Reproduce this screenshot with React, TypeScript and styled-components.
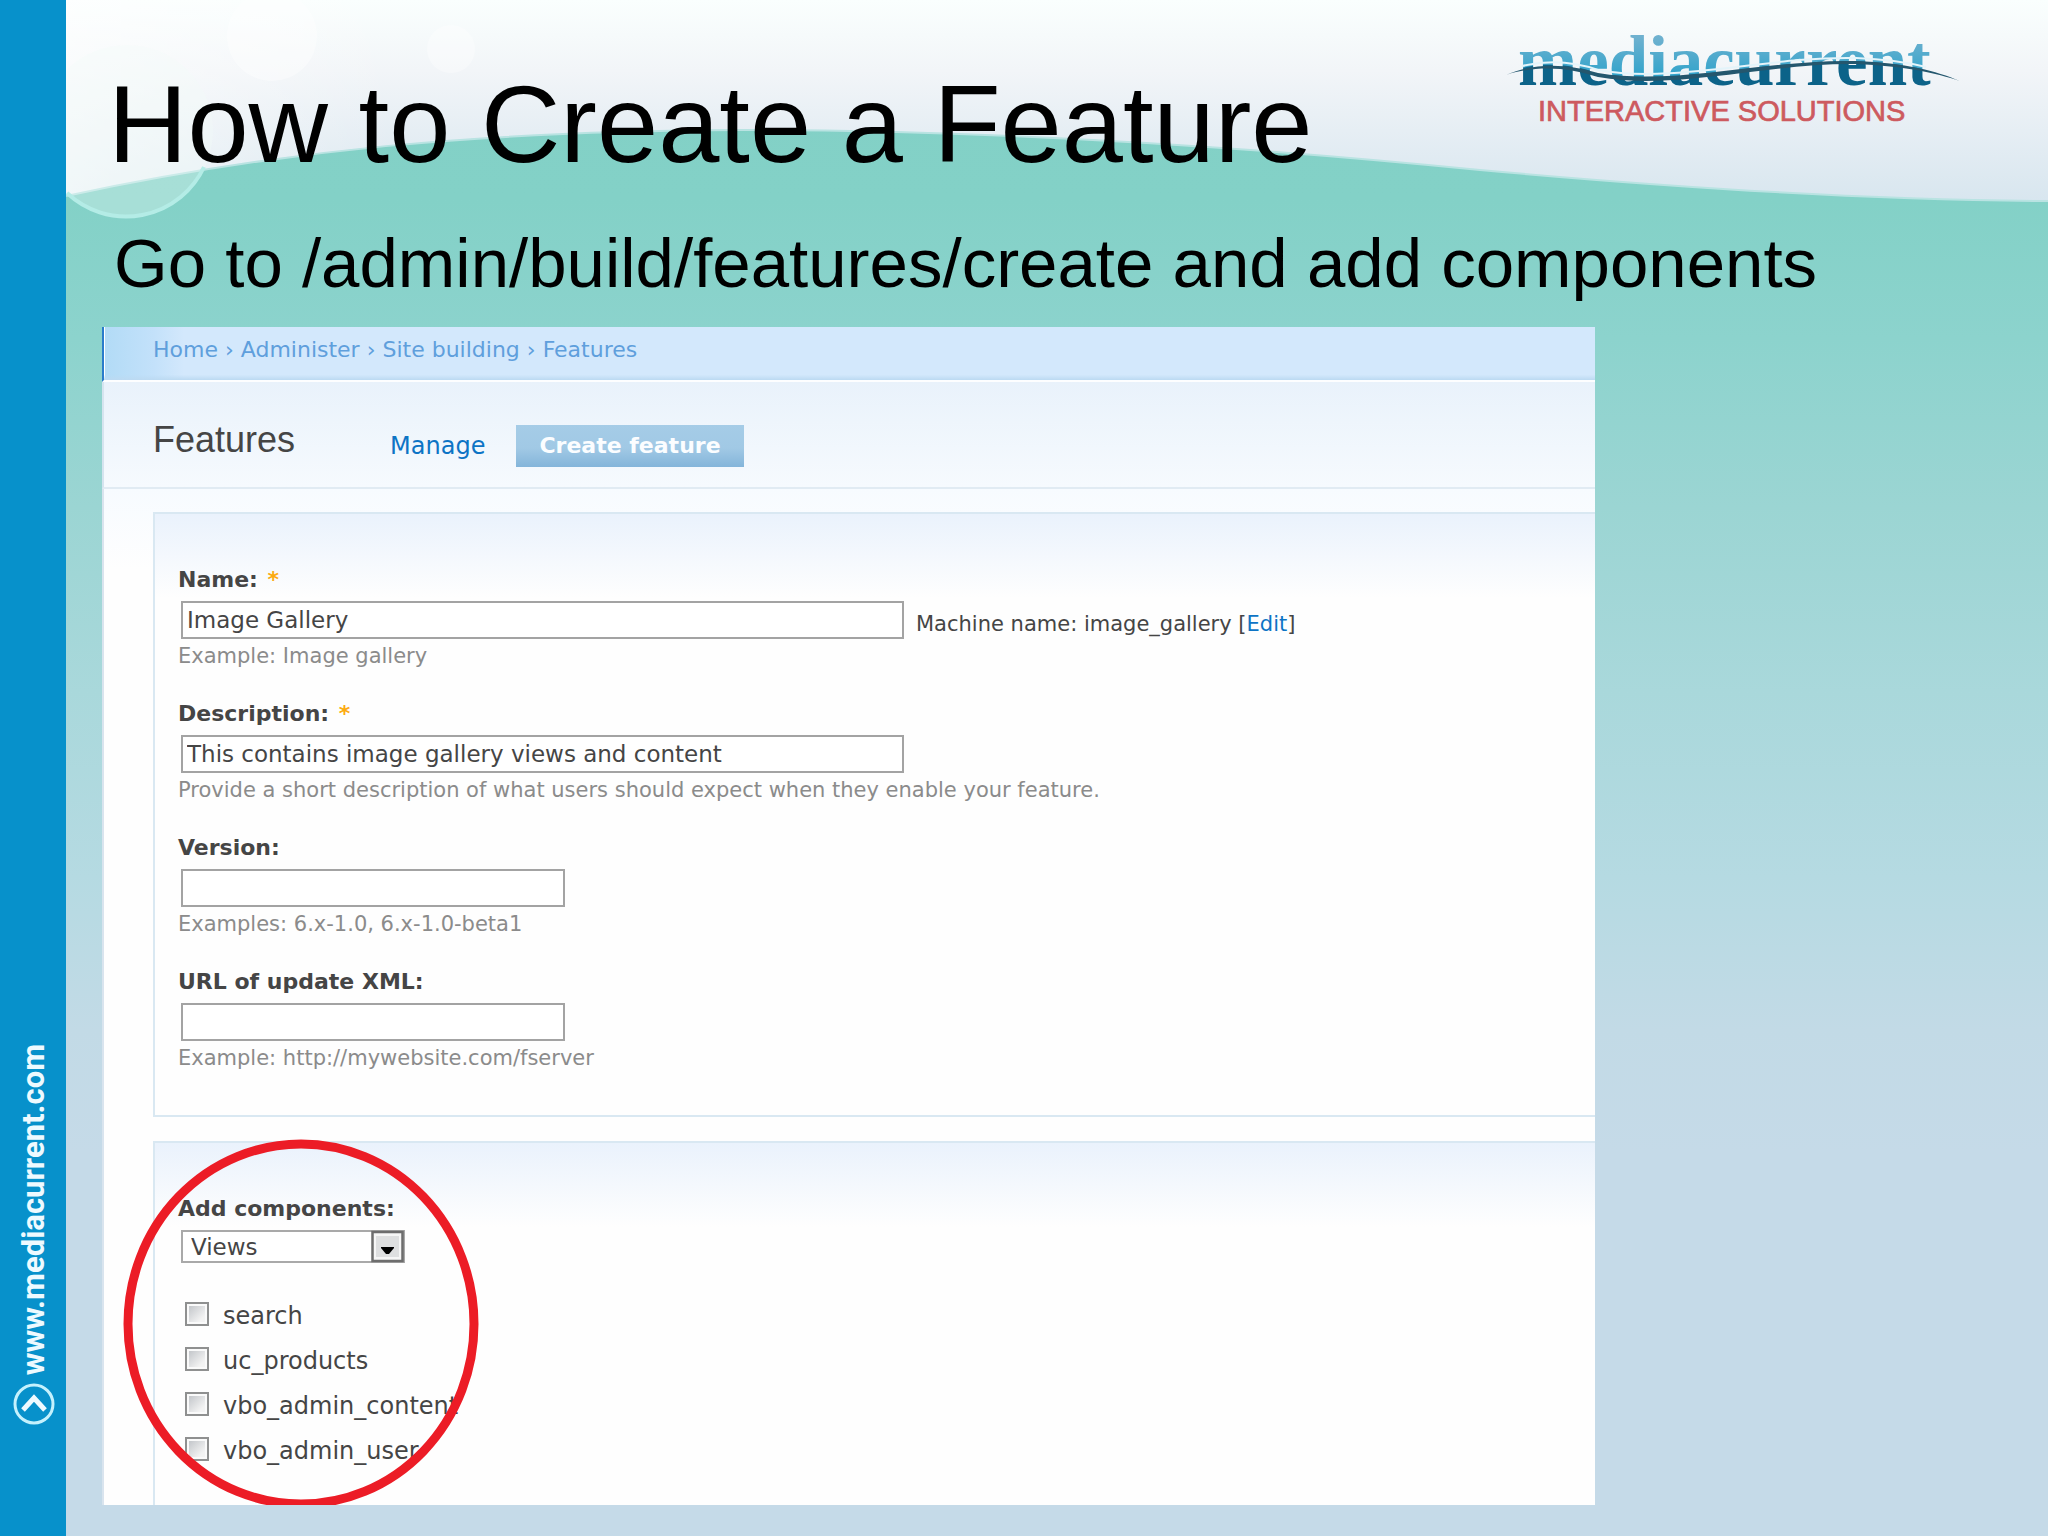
import React from "react";
import styled, { createGlobalStyle, css } from "styled-components";

const sans = `"Liberation Sans", Arial, Helvetica, sans-serif`;
const ui = `"DejaVu Sans", Verdana, sans-serif`;

const GlobalStyle = createGlobalStyle`
  *, *::before, *::after { box-sizing: border-box; }
  body { margin: 0; font-family: ${sans}; color: #000; }
  h1, h2, p, ul, ol { margin: 0; padding: 0; font-weight: normal; }
  a { text-decoration: none; }
`;

const Slide = styled.div`
  display: flex;
  min-height: 100vh;
  overflow: hidden;
  background: linear-gradient(
    #82d0c5 0%, #83d1c7 13%, #8cd3cd 22%, #9bd5d3 33%, #a9d8db 45%,
    #b5dae2 57%, #c2dae6 67%, #c5dae8 75%, #c5dae8 100%
  );
`;

const SideRail = styled.aside`
  flex: none;
  width: 66px;
  padding: 0 0 112px 2px;
  display: flex;
  flex-direction: column;
  justify-content: flex-end;
  align-items: center;
  gap: 8px;
  background: #0791cb;
`;

const SiteLink = styled.a`
  writing-mode: vertical-rl;
  transform: rotate(180deg);
  font: bold 31px/36px Roboto, "Arial Narrow", sans-serif;
  color: #eefaff;
`;

const Main = styled.main`
  position: relative;
  flex: 1;
  min-width: 0;
  padding: 27px 0 32px 36px;
`;

const WaveArt = styled.svg`
  position: absolute;
  top: 0;
  left: 0;
  width: 100%;
  height: 230px;
`;

const TitleRow = styled.header`
  position: relative;
  display: flex;
  justify-content: space-between;
  align-items: flex-start;
  padding: 0 86px 0 6px;
`;

const Title = styled.h1`
  padding-top: 37px;
  font-size: 110px;
  line-height: 120px;
`;

const Subtitle = styled.p`
  position: relative;
  margin: 40px 0 23px;
  padding-left: 12px;
  font-size: 69px;
  line-height: 80px;
`;

const PanelGrid = styled.div`
  position: relative;
  display: grid;
  grid-template-columns: minmax(0, 1493fr) minmax(0, 453fr);
`;

const Panel = styled.section`
  overflow: hidden;
  background: #fefefe;
  font-family: ${ui};
  color: #454545;
`;

const Breadcrumb = styled.nav`
  padding: 8px 0 15px 49px;
  border-left: 2px solid #2a7ccb;
  border-bottom: 2px solid #fdfeff;
  background:
    linear-gradient(transparent 90%, #bcdaf2 100%),
    linear-gradient(90deg, #fff 0 1px, #b2dbf6 1px, #c3e1fa 50px, #d3e8fc 80px);
  font-size: 22px;
  line-height: 30px;
  color: #5f9fdc;

  a { color: inherit; }
`;

const PanelHead = styled.div`
  display: flex;
  align-items: flex-start;
  padding: 43px 0 20px 49px;
  border-left: 2px solid #d5e4ef;
  border-bottom: 2px solid #e1ebf3;
  background: linear-gradient(#e9f2fb, #f6fafe);
`;

const PanelTitle = styled.h2`
  font: 36px/30px ${sans};
  color: #454545;
`;

const Tabs = styled.nav`
  display: flex;
  gap: 8px;
  margin-left: 72px;
`;

const Tab = styled.a<{ $active?: boolean }>`
  padding: 0 23px;
  font-size: 24px;
  line-height: 42px;
  color: #0d74c5;
  ${(p) =>
    p.$active &&
    css`
      font-size: 22px;
      font-weight: bold;
      color: #fbfdff;
      background: linear-gradient(#a5cce7 0%, #a1c9e5 55%, #84b5da 100%);
    `}
`;

const FormBody = styled.form`
  display: flex;
  flex-direction: column;
  gap: 24px;
  padding: 23px 0 0 49px;
  border-left: 2px solid #d9e4ee;
  background: linear-gradient(#f7fbff, #fefefe 80px);
`;

const Group = styled.div<{ $open?: boolean }>`
  position: relative;
  display: flex;
  flex-direction: column;
  gap: 28px;
  padding: 51px 0 ${(p) => (p.$open ? 31 : 42)}px 23px;
  border: 2px solid #d9e8f2;
  border-right: 0;
  ${(p) => p.$open && "border-bottom: 0;"}
  background: linear-gradient(#eaf2fc, #fefefe 84px);
`;

const Label = styled.label`
  display: block;
  margin-bottom: 6px;
  font-size: 22px;
  font-weight: bold;
  line-height: 30px;
`;

const Required = styled.span`
  margin-left: 2px;
  color: #fcab10;
`;

const InputRow = styled.div`
  display: flex;
  align-items: flex-end;
  gap: 12px;
  margin-left: 3px;
`;

const TextInput = styled.input<{ $wide?: boolean }>`
  width: ${(p) => (p.$wide ? 723 : 384)}px;
  height: 38px;
  padding: 0 4px;
  border: 2px solid #a3a3a3;
  border-radius: 0;
  outline: 0;
  background: #fff;
  font: 23px ${ui};
  color: #454545;
`;

const MachineName = styled.span`
  font-size: 21px;
  line-height: 30px;

  a { color: #0d74c5; }
`;

const Hint = styled.p`
  margin-top: 2px;
  font-size: 21px;
  line-height: 30px;
  color: #8b8b8b;
`;

const SelectBox = styled.div`
  display: inline-grid;
  margin-left: 3px;
  align-items: center;
  vertical-align: top;

  > * { grid-area: 1 / 1; }
  > svg { justify-self: end; pointer-events: none; }
`;

const Select = styled.select`
  appearance: none;
  width: 224px;
  height: 33px;
  padding: 0 40px 0 8px;
  border: 2px solid #a9a9a9;
  border-radius: 0;
  background: #fff;
  font: 23px ${ui};
  color: #454545;
`;

const CheckList = styled.ul`
  list-style: none;
  padding: 3px 0 0 7px;
`;

const CheckRow = styled.label`
  display: flex;
  align-items: center;
  gap: 14px;
  font-size: 24px;
  line-height: 45px;
`;

const Checkbox = styled.input`
  appearance: none;
  width: 24px;
  height: 24px;
  margin: 0 0 6px;
  padding: 2px;
  border: 2px solid #8f9090;
  background:
    linear-gradient(135deg, #c3c6ca, #f3f3f3 80%) content-box,
    #fafafa;
`;

const Marker = styled.svg`
  position: absolute;
  top: -4px;
  left: -32px;
  width: 356px;
  height: 370px;
  pointer-events: none;
`;

const waterline =
  "M0 196 C214 150 414 131 674 130 C934 130 1184 147 1414 170 C1634 190 1814 200 1982 201";

function HeaderWave() {
  return (
    <WaveArt viewBox="0 0 1982 230" preserveAspectRatio="none" aria-hidden="true">
      <defs>
        <linearGradient id="sky" x1="0" y1="0" x2="0" y2="1">
          <stop offset="0" stopColor="#fafffe" />
          <stop offset="0.35" stopColor="#f2f5f8" />
          <stop offset="0.65" stopColor="#e6eef4" />
          <stop offset="1" stopColor="#d8e6ef" />
        </linearGradient>
        <linearGradient id="glow" x1="0" y1="0" x2="1" y2="0">
          <stop offset="0" stopColor="#fff" stopOpacity="0.6" />
          <stop offset="1" stopColor="#fff" stopOpacity="0" />
        </linearGradient>
      </defs>
      <path d={`${waterline} V0 H0 Z`} fill="url(#sky)" />
      <path d="M0 196 C100 175 200 155 330 146 V0 H0 Z" fill="url(#glow)" />
      <path d={waterline} fill="none" stroke="#b9e3e2" strokeWidth="2" />
      <circle cx="61" cy="131" r="86" fill="#f4fbfa" fillOpacity="0.32" />
      <path d="M1 193 A86 86 0 0 0 138 167" fill="none" stroke="#b4ece6" strokeWidth="4" />
      <circle cx="206" cy="36" r="45" fill="#fff" fillOpacity="0.4" />
      <circle cx="385" cy="49" r="24" fill="#fff" fillOpacity="0.35" />
    </WaveArt>
  );
}

function Logo() {
  return (
    <svg width="456" height="100" viewBox="0 0 456 100" role="img" aria-label="mediacurrent interactive solutions">
      <defs>
        <linearGradient id="logoLight" x1="0" y1="0" x2="0" y2="1">
          <stop offset="0.1" stopColor="#6fb1cf" />
          <stop offset="0.5" stopColor="#2fa3cb" />
        </linearGradient>
        <pattern id="logoTwoTone" patternUnits="userSpaceOnUse" width="456" height="100">
          <rect width="456" height="100" fill="url(#logoLight)" />
          <path d="M0 46 C30 34 62 36 92 46 C170 60 260 32 350 34 C400 36 430 44 456 54 V100 H0 Z" fill="#0c6389" />
        </pattern>
      </defs>
      <text
        x="12"
        y="58"
        fill="url(#logoTwoTone)"
        fontFamily="'Liberation Serif', 'Times New Roman', serif"
        fontWeight="bold"
        fontSize="71"
      >
        mediacurrent
      </text>
      <path d="M16 39 C42 33 66 34 92 43 C170 57 260 29 350 31 C376 32 400 35 420 40" fill="none" stroke="#e4f4fa" strokeWidth="2" />
      <path d="M0 48 C30 35 62 37 92 46 C170 59 260 32 350 34 C400 36 430 44 454 54 C430 46 400 39 350 37 C260 36 170 64 92 50 C62 40 30 38 0 48 Z" fill="#24576e" />
      <text x="32" y="94" fill="#cd5a5f" fontFamily="'Liberation Sans', Arial, sans-serif" fontSize="29" stroke="#cd5a5f" strokeWidth="0.7">
        INTERACTIVE SOLUTIONS
      </text>
    </svg>
  );
}

function RailBadge() {
  return (
    <svg width="42" height="42" viewBox="0 0 42 42" fill="none" aria-hidden="true">
      <circle cx="21" cy="21" r="19" stroke="#c4f1fd" strokeWidth="3" />
      <path d="M10 27 L21 15 L32 27" stroke="#eefaff" strokeWidth="5" />
    </svg>
  );
}

function DropArrow() {
  return (
    <svg width="34" height="33" viewBox="0 0 34 33" aria-hidden="true">
      <rect x="1.5" y="2" width="30" height="29" fill="#f6f6f6" stroke="#6d6d6d" strokeWidth="2.5" />
      <rect x="5" y="6" width="23" height="21" fill="#dedfe0" />
      <path d="M10 17 H23 V18 L18 24 H15 L10 18 Z" fill="#000" />
    </svg>
  );
}

const crumbs = ["Home", "Administer", "Site building", "Features"];

const fields = [
  { id: "name", label: "Name:", value: "Image Gallery", hint: "Example: Image gallery", required: true, machine: "image_gallery" },
  { id: "description", label: "Description:", value: "This contains image gallery views and content", hint: "Provide a short description of what users should expect when they enable your feature.", required: true },
  { id: "version", label: "Version:", value: "", hint: "Examples: 6.x-1.0, 6.x-1.0-beta1" },
  { id: "url", label: "URL of update XML:", value: "", hint: "Example: http://mywebsite.com/fserver" },
];

const views = ["search", "uc_products", "vbo_admin_content", "vbo_admin_user"];

export default function App() {
  return (
    <>
      <GlobalStyle />
      <Slide>
        <SideRail>
          <SiteLink href="#site">www.mediacurrent.com</SiteLink>
          <RailBadge />
        </SideRail>
        <Main>
          <HeaderWave />
          <TitleRow>
            <Title>How to Create a Feature</Title>
            <Logo />
          </TitleRow>
          <Subtitle>Go to /admin/build/features/create and add components</Subtitle>
          <PanelGrid>
            <Panel>
              <Breadcrumb aria-label="Breadcrumb">
                {crumbs.map((c, i) => (
                  <React.Fragment key={c}>
                    {i > 0 && " › "}
                    <a href="#crumb">{c}</a>
                  </React.Fragment>
                ))}
              </Breadcrumb>
              <PanelHead>
                <PanelTitle>Features</PanelTitle>
                <Tabs aria-label="Features">
                  <Tab href="#manage">Manage</Tab>
                  <Tab href="#create" $active aria-current="page">Create feature</Tab>
                </Tabs>
              </PanelHead>
              <FormBody onSubmit={(e) => e.preventDefault()}>
                <Group>
                  {fields.map((f) => (
                    <div key={f.id}>
                      <Label htmlFor={f.id}>
                        {f.label} {f.required && <Required>*</Required>}
                      </Label>
                      <InputRow>
                        <TextInput id={f.id} type="text" defaultValue={f.value} $wide={f.required} />
                        {f.machine && (
                          <MachineName>
                            Machine name: {f.machine} [<a href="#edit">Edit</a>]
                          </MachineName>
                        )}
                      </InputRow>
                      <Hint>{f.hint}</Hint>
                    </div>
                  ))}
                </Group>
                <Group $open>
                  <div>
                    <Label htmlFor="components">Add components:</Label>
                    <SelectBox>
                      <Select id="components" defaultValue="Views">
                        <option>Views</option>
                      </Select>
                      <DropArrow />
                    </SelectBox>
                  </div>
                  <CheckList>
                    {views.map((v) => (
                      <li key={v}>
                        <CheckRow>
                          <Checkbox type="checkbox" />
                          {v}
                        </CheckRow>
                      </li>
                    ))}
                  </CheckList>
                  <Marker viewBox="0 0 356 370" aria-hidden="true">
                    <ellipse cx="178" cy="185" rx="173" ry="180" fill="none" stroke="#ec1c26" strokeWidth="9" />
                  </Marker>
                </Group>
              </FormBody>
            </Panel>
          </PanelGrid>
        </Main>
      </Slide>
    </>
  );
}
